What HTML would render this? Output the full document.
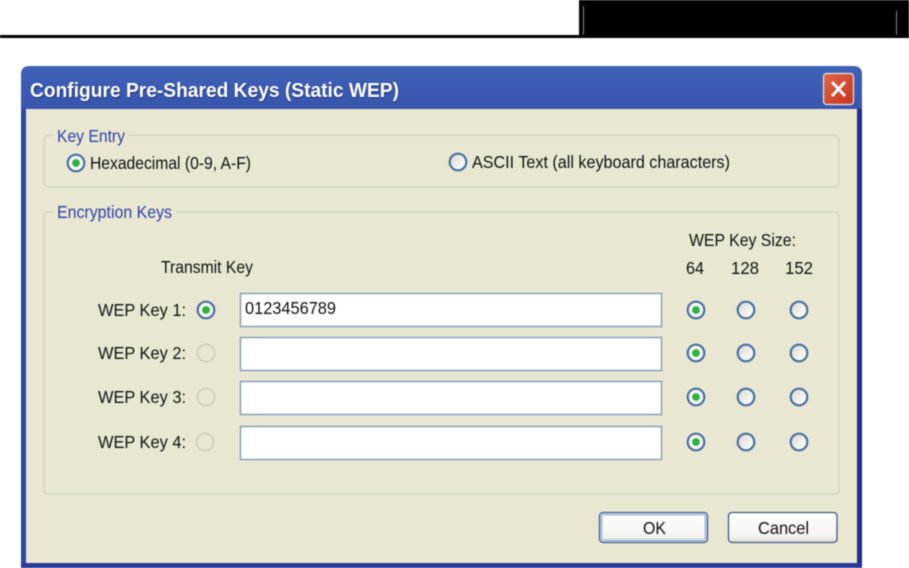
<!DOCTYPE html>
<html>
<head>
<meta charset="utf-8">
<style>
html,body{margin:0;padding:0;background:#fff;width:909px;height:568px;overflow:hidden}
svg{display:block;filter:blur(.45px)}
text{font-family:"Liberation Sans",sans-serif;font-size:17.5px;fill:#111}
.b{fill:#2f44a8}
.t{font-size:20px;font-weight:bold;fill:#fff}
</style>
</head>
<body>
<svg width="909" height="568" viewBox="0 0 909 568" xmlns="http://www.w3.org/2000/svg">
<defs>
<linearGradient id="tb" x1="0" y1="0" x2="0" y2="1">
<stop offset="0" stop-color="#3d62b6"/>
<stop offset=".08" stop-color="#3a56ae"/>
<stop offset=".45" stop-color="#3850ab"/>
<stop offset=".8" stop-color="#3f63b6"/>
<stop offset="1" stop-color="#3f60b2"/>
</linearGradient>
<linearGradient id="rd" x1="0" y1="0" x2="1" y2="1">
<stop offset="0" stop-color="#d6d6d0"/>
<stop offset=".7" stop-color="#f6f6f4"/>
<stop offset="1" stop-color="#fff"/>
</linearGradient>
<linearGradient id="btn" x1="0" y1="0" x2="0" y2="1">
<stop offset="0" stop-color="#fff"/>
<stop offset=".8" stop-color="#f4f3ee"/>
<stop offset="1" stop-color="#dcd8ce"/>
</linearGradient>
<linearGradient id="cl" x1="0" y1="0" x2="1" y2="1">
<stop offset="0" stop-color="#e2664a"/>
<stop offset="1" stop-color="#c5341a"/>
</linearGradient>
<filter id="sh" x="-5%" y="-30%" width="110%" height="160%"><feGaussianBlur stdDeviation=".7"/></filter>
<g id="r"><circle r="8.3" fill="url(#rd)" stroke="#45709f" stroke-width="2.2"/></g>
<g id="ro"><circle r="8.3" fill="#f6f6f4" stroke="#45709f" stroke-width="2.2"/><circle r="3.9" fill="#2fb33f"/></g>
<g id="rx"><circle r="8.6" fill="#e9e7d2" stroke="#cfcebc" stroke-width="1.8"/></g>
</defs>

<!-- page header -->
<rect x="0" y="35" width="909" height="3" fill="#000"/>
<rect x="579" y="0" width="330" height="38" fill="#000"/>
<rect x="583" y="6" width="1" height="29" fill="#8a8a8a"/>
<rect x="896" y="11" width="1" height="24" fill="#8a8a8a"/>

<!-- window -->
<path d="M21 568V74Q21 66 30 66H853Q862 66 862 74V568Z" fill="url(#tb)"/>
<rect x="21" y="109" width="5" height="459" fill="#2f47a6"/>
<rect x="857" y="109" width="5" height="459" fill="#232f8c"/>
<rect x="21" y="563" width="841" height="5" fill="#2a3a97"/>
<rect x="26" y="109" width="831" height="454" fill="#e9e7d2"/>

<!-- title -->
<text x="31" y="98" class="t" textLength="368" lengthAdjust="spacingAndGlyphs" style="fill:#1c2c70" filter="url(#sh)">Configure Pre-Shared Keys (Static WEP)</text>
<text x="30" y="97" class="t" textLength="369" lengthAdjust="spacingAndGlyphs">Configure Pre-Shared Keys (Static WEP)</text>

<!-- close -->
<rect x="823.5" y="73.5" width="30" height="31" rx="3" fill="url(#cl)" stroke="#e6e4ee" stroke-width="1.2"/>
<path d="M832 82L845 96M845 82L832 96" stroke="#fff" stroke-width="2.8" fill="none"/>

<!-- group boxes -->
<rect x="44" y="135.5" width="795" height="51.5" rx="4" fill="none" stroke="#d0d0bf" stroke-width="1.2"/>
<rect x="54" y="130" width="74" height="12" fill="#e9e7d2"/>
<text x="57" y="142" class="b" textLength="68" lengthAdjust="spacingAndGlyphs">Key Entry</text>
<rect x="44" y="212" width="795" height="282" rx="4" fill="none" stroke="#d0d0bf" stroke-width="1.2"/>
<rect x="54" y="206" width="122" height="12" fill="#e9e7d2"/>
<text x="57" y="218" class="b" textLength="115" lengthAdjust="spacingAndGlyphs">Encryption Keys</text>

<!-- key entry -->
<use href="#ro" x="76" y="163"/>
<text x="90" y="169" textLength="161" lengthAdjust="spacingAndGlyphs">Hexadecimal (0-9, A-F)</text>
<use href="#r" x="458" y="162"/>
<text x="472" y="168" textLength="258" lengthAdjust="spacingAndGlyphs">ASCII Text (all keyboard characters)</text>

<!-- headers -->
<text x="161" y="273" textLength="92" lengthAdjust="spacingAndGlyphs">Transmit Key</text>
<text x="689" y="246" textLength="107" lengthAdjust="spacingAndGlyphs">WEP Key Size:</text>
<text x="686" y="274" textLength="18" lengthAdjust="spacingAndGlyphs">64</text>
<text x="731" y="274" textLength="28" lengthAdjust="spacingAndGlyphs">128</text>
<text x="785" y="274" textLength="28" lengthAdjust="spacingAndGlyphs">152</text>

<!-- key labels -->
<text x="98" y="316" textLength="88" lengthAdjust="spacingAndGlyphs">WEP Key 1:</text>
<text x="98" y="359" textLength="88" lengthAdjust="spacingAndGlyphs">WEP Key 2:</text>
<text x="98" y="403" textLength="88" lengthAdjust="spacingAndGlyphs">WEP Key 3:</text>
<text x="98" y="448" textLength="88" lengthAdjust="spacingAndGlyphs">WEP Key 4:</text>

<!-- transmit radios -->
<use href="#ro" x="206" y="310"/>
<use href="#rx" x="206" y="353"/>
<use href="#rx" x="206" y="397"/>
<use href="#rx" x="205" y="442"/>

<!-- inputs -->
<rect x="240.5" y="293.5" width="421" height="33" fill="#fff" stroke="#7f9db9" stroke-width="1.4"/>
<rect x="240.5" y="337.5" width="421" height="33" fill="#fff" stroke="#7f9db9" stroke-width="1.4"/>
<rect x="240.5" y="381.5" width="421" height="33" fill="#fff" stroke="#7f9db9" stroke-width="1.4"/>
<rect x="240.5" y="426.5" width="421" height="33" fill="#fff" stroke="#7f9db9" stroke-width="1.4"/>
<text x="245" y="314" textLength="91" lengthAdjust="spacingAndGlyphs">0123456789</text>

<!-- size radios -->
<use href="#ro" x="696" y="310"/><use href="#r" x="746" y="310"/><use href="#r" x="799" y="310"/>
<use href="#ro" x="696" y="353"/><use href="#r" x="746" y="353"/><use href="#r" x="799" y="353"/>
<use href="#ro" x="696" y="397"/><use href="#r" x="746" y="397"/><use href="#r" x="799" y="397"/>
<use href="#ro" x="696" y="442"/><use href="#r" x="746" y="442"/><use href="#r" x="799" y="442"/>

<!-- buttons -->
<rect x="599.5" y="512.5" width="108" height="30" rx="3.5" fill="url(#btn)" stroke="#3c5a8c" stroke-width="1.3"/>
<rect x="601.5" y="514.5" width="104" height="26" rx="2" fill="none" stroke="#a8c0e6" stroke-width="2"/>
<text x="643" y="534" textLength="23" lengthAdjust="spacingAndGlyphs">OK</text>
<rect x="728.5" y="512.5" width="108.5" height="30" rx="3.5" fill="url(#btn)" stroke="#3c5a8c" stroke-width="1.3"/>
<text x="758" y="534" textLength="51" lengthAdjust="spacingAndGlyphs">Cancel</text>
</svg>
</body>
</html>
